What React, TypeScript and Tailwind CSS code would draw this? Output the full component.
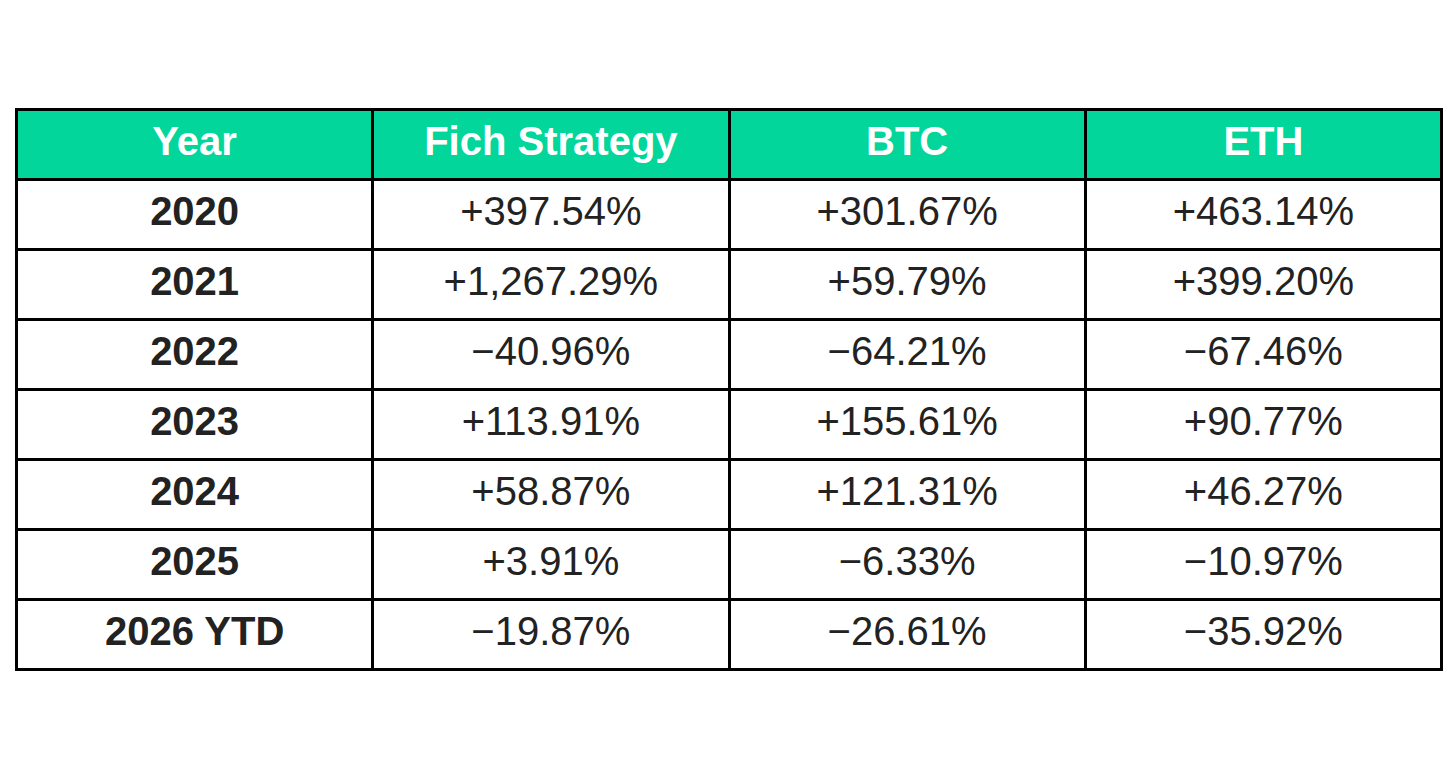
import React from "react";

const rows: [string, string, string, string][] = [
  ["2020", "+397.54%", "+301.67%", "+463.14%"],
  ["2021", "+1,267.29%", "+59.79%", "+399.20%"],
  ["2022", "\u221240.96%", "\u221264.21%", "\u221267.46%"],
  ["2023", "+113.91%", "+155.61%", "+90.77%"],
  ["2024", "+58.87%", "+121.31%", "+46.27%"],
  ["2025", "+3.91%", "\u22126.33%", "\u221210.97%"],
  ["2026 YTD", "\u221219.87%", "\u221226.61%", "\u221235.92%"],
];

export default function App() {
  return (
    <div
      className="w-[1456px] h-[779px] bg-white pt-[108px] pl-[15px]"
      style={{ fontFamily: '"Liberation Sans", Arial, sans-serif' }}
    >
      <table className="w-[1428px] border-collapse border-[3px] border-black text-[40px] leading-none text-[#222]">
        <colgroup>
          <col className="w-1/4" />
          <col className="w-1/4" />
          <col className="w-1/4" />
          <col className="w-1/4" />
        </colgroup>
        <thead>
          <tr className="h-[70px] bg-[#02d69b]">
            {["Year", "Fich Strategy", "BTC", "ETH"].map((h) => (
              <th key={h} className="border-[3px] border-black text-white font-bold text-center align-middle pb-[8px]">
                {h}
              </th>
            ))}
          </tr>
        </thead>
        <tbody>
          {rows.map((r) => (
            <tr key={r[0]} className="h-[70px]">
              <td className="border-[3px] border-black text-center align-middle font-bold pb-[8px]">{r[0]}</td>
              <td className="border-[3px] border-black text-center align-middle pb-[8px]">{r[1]}</td>
              <td className="border-[3px] border-black text-center align-middle pb-[8px]">{r[2]}</td>
              <td className="border-[3px] border-black text-center align-middle pb-[8px]">{r[3]}</td>
            </tr>
          ))}
        </tbody>
      </table>
    </div>
  );
}
